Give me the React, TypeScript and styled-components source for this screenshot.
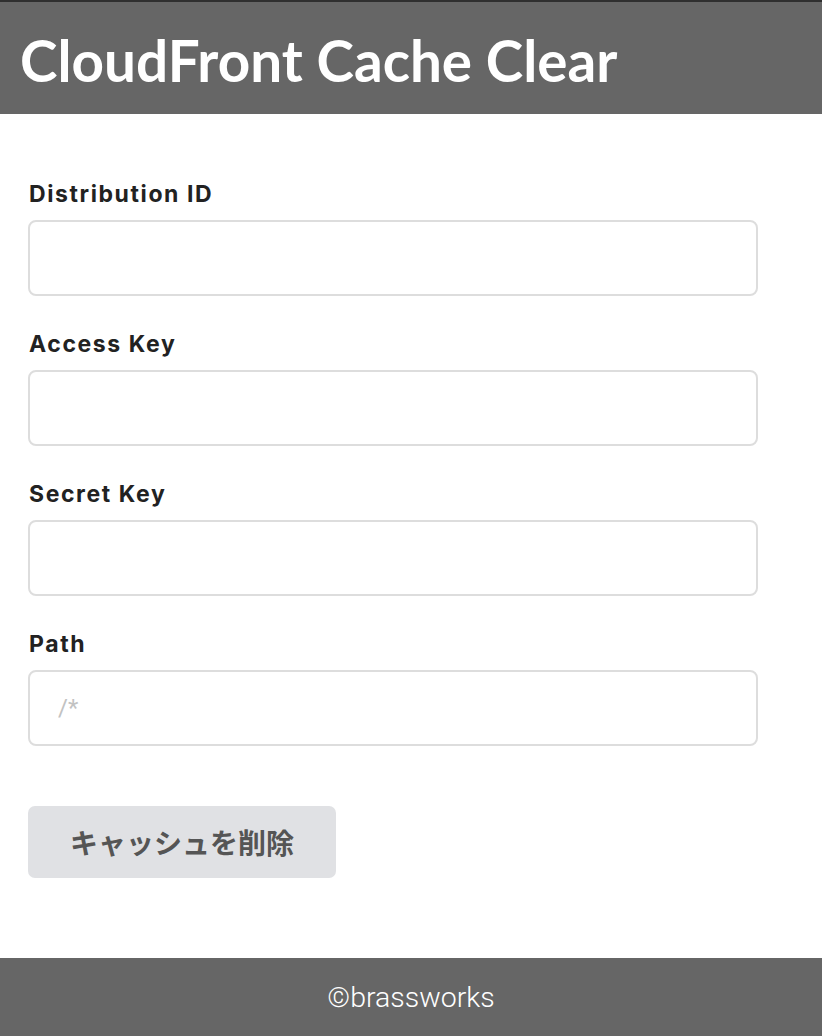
import styled, { createGlobalStyle } from 'styled-components';

const GlobalStyle = createGlobalStyle`
  html, body {
    margin: 0;
    padding: 0;
    background: #fff;
  }
  * {
    box-sizing: border-box;
  }
`

const Page = styled.div`
  min-height: 100vh;
  display: flex;
  flex-direction: column;
`

const Header = styled.header`
  background-color: #666;
  border-top: 2px solid #2f2f2f;
  height: 114px;
  display: flex;
  align-items: center;
  padding: 4px 0 0 20px;
`

const Title = styled.h1`
  margin: 0;
  font-family: Lato, "Liberation Sans", sans-serif;
  font-weight: 700;
  font-size: 56.6px;
  color: #fff;
  line-height: 1;
`

const Main = styled.main`
  flex: 1;
  padding: 66px 64px 80px 28px;
  display: flex;
  flex-direction: column;
`

const Field = styled.div`
  display: flex;
  flex-direction: column;
  margin-bottom: 34px;
`

const Label = styled.label`
  font-family: Inter, "Noto Sans", sans-serif;
  font-weight: 700;
  font-size: 23px;
  line-height: 28px;
  letter-spacing: 1.6px;
  color: #222;
  margin-bottom: 12px;
  padding-left: 1px;
`

const Input = styled.input`
  height: 76px;
  width: 100%;
  border: 2px solid #ddd;
  border-radius: 8px;
  padding: 0 28px;
  font-family: Roboto, "Liberation Sans", sans-serif;
  font-size: 24px;
  color: #333;
  outline: none;
  &::placeholder {
    color: #c2c2c2;
  }
`

const Button = styled.button`
  margin-top: 26px;
  width: 308px;
  height: 72px;
  border: none;
  border-radius: 7px;
  background-color: #e0e1e4;
  color: #555;
  font-family: "Noto Sans CJK JP", sans-serif;
  font-weight: 700;
  font-size: 28px;
  cursor: pointer;
`

const Footer = styled.footer`
  background-color: #666;
  height: 78px;
  display: flex;
  align-items: center;
  justify-content: center;
  color: #fff;
  font-family: Roboto, "Liberation Sans", sans-serif;
  font-weight: 300;
  font-size: 28.5px;
`

const fields = [
  { id: 'distribution', label: 'Distribution ID', placeholder: '' },
  { id: 'access', label: 'Access Key', placeholder: '' },
  { id: 'secret', label: 'Secret Key', placeholder: '' },
  { id: 'path', label: 'Path', placeholder: '/*' },
];

export default function App() {
  return (
    <>
      <GlobalStyle />
      <Page>
        <Header>
          <Title>CloudFront Cache Clear</Title>
        </Header>
        <Main>
          {fields.map((f) => (
            <Field key={f.id}>
              <Label htmlFor={f.id}>{f.label}</Label>
              <Input id={f.id} placeholder={f.placeholder} />
            </Field>
          ))}
          <div>
            <Button>キャッシュを削除</Button>
          </div>
        </Main>
        <Footer>©brassworks</Footer>
      </Page>
    </>
  )
}
